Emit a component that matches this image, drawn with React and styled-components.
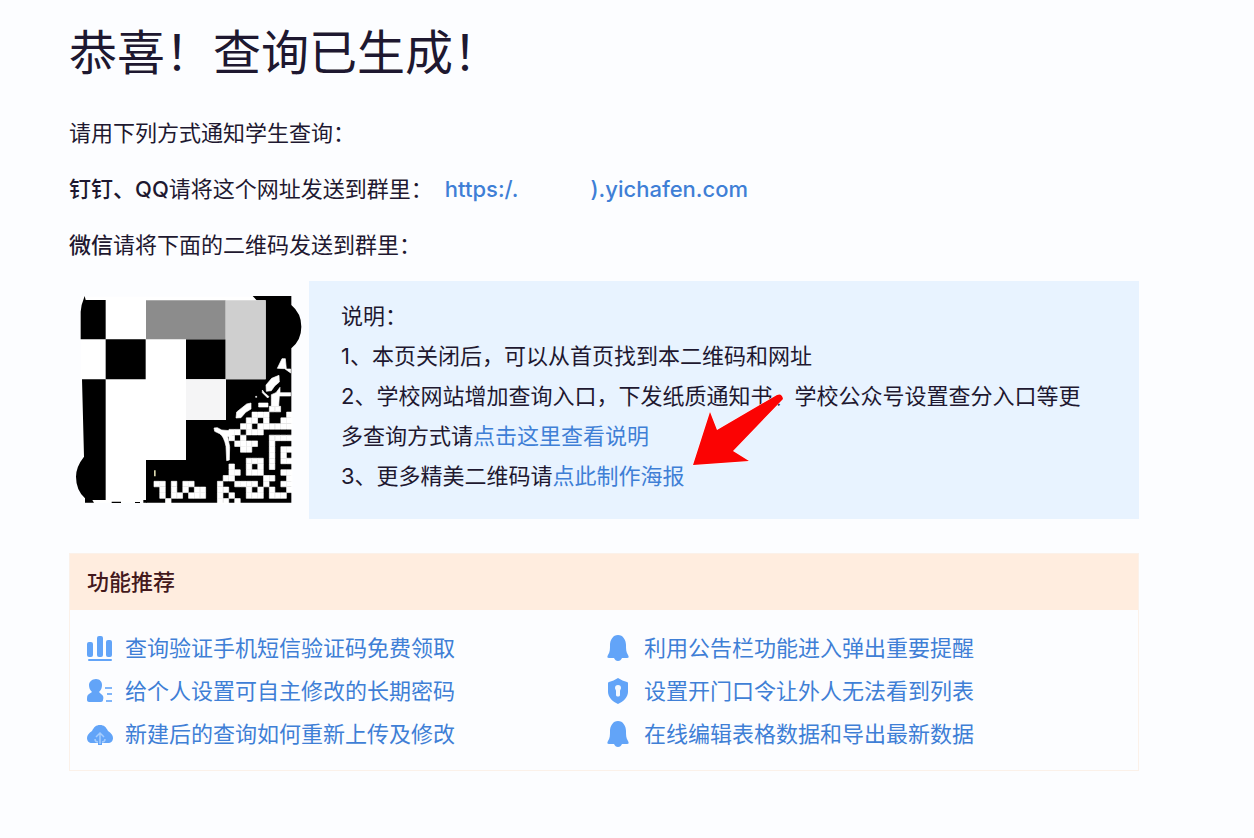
import React from 'react'
import styled, { createGlobalStyle } from 'styled-components'

const blue = '#3f7fd6'
const icon = '#62a4f8'

const GlobalStyle = createGlobalStyle`
  * {
    box-sizing: border-box;
  }

  body {
    margin: 0;
    background: #fcfdff;
    color: #1e1830;
    font-family: Inter, 'Noto Sans CJK SC', sans-serif;
    font-size: 22px;
    line-height: 40px;
  }
`

const Page = styled.main`
  padding: 17px 115px 48px 69px;
`

const Title = styled.h1`
  margin: 0 0 24px;

  font-size: 48px;
  font-weight: 400;
  line-height: 72px;
`

const Line = styled.p`
  margin: 0 0 16px;
`

const Strong = styled.strong`
  font-weight: 500;
`

const Link = styled.a`
  color: ${blue};
  text-decoration: none;
`

const SiteLink = styled(Link)`
  margin-left: 12px;

  font-weight: 500;
`

const Masked = styled.span`
  display: inline-block;
  width: 72px;
`

const Share = styled.section`
  margin-bottom: 34px;

  display: flex;
  align-items: stretch;
`

const QrCode = styled.svg`
  flex: none;
  width: 240px;
  height: 238px;
`

const Notes = styled.div`
  position: relative;
  flex: 1;
  padding: 15px 40px 23px 32px;

  background: #e8f3ff;

  p {
    margin: 0;
  }
`

const Pointer = styled.svg`
  position: absolute;
  top: 112px;
  left: 383px;
  width: 93px;
  height: 74px;
`

const Features = styled.section`
  border: 1px solid #fbf1e9;
`

const FeaturesTitle = styled.h2`
  margin: 0;
  padding: 8px 17px;

  background: #ffeddf;
  color: #43191c;
  font-size: 22px;
  font-weight: 500;
`

const FeatureList = styled.ul`
  margin: 0;
  padding: 18px 13px 16px 17px;

  display: grid;
  grid-template-columns: 1fr 1fr;
  row-gap: 3px;
  list-style: none;
`

const Feature = styled(Link)`
  display: flex;
  align-items: center;
  gap: 12px;

  svg {
    flex: none;
    width: 26px;
    height: 28px;
    fill: ${icon};
  }
`

const ChartIcon = () => (
  <svg viewBox='0 0 26 28' aria-hidden='true'>
    <rect x='0' y='8' width='6' height='15' rx='2' />
    <rect x='10' y='2' width='6' height='21' rx='2' />
    <rect x='19' y='6' width='6' height='17' rx='2' />
    <rect x='1' y='25' width='24' height='2' rx='1' />
  </svg>
)

const UserIcon = () => (
  <svg viewBox='0 0 26 28' aria-hidden='true'>
    <path d='M9 2c4 0 6 3 6 6 0 3-1 5-3 7l2 2c2 1 3 3 2 6 0 1-1 2-2 2H2c-1 0-2-1-2-2 0-3 0-5 2-6l3-2C3 13 2 11 2 8c0-3 3-6 7-6z' />
    <path d='M18 10h7v2h-7zM20 16h5v2h-5zM19 23h6v2h-6z' opacity='0.8' />
  </svg>
)

const CloudIcon = () => (
  <svg viewBox='0 0 26 28' aria-hidden='true'>
    <path d='M13 5c4 0 6 2 8 6 3 2 5 4 5 7s-2 5-5 5h-6v2h-4v-2H5c-3 0-5-2-5-5s2-5 5-7c2-4 4-6 8-6z' />
    <path
      d='M13 24V13M9 17l4-4 4 4M8 19q0 3 3 3M18 19q0 3-3 3'
      fill='none'
      stroke='#a5cdfd'
      strokeWidth='1.5'
    />
  </svg>
)

const BellIcon = () => (
  <svg viewBox='0 0 26 28' aria-hidden='true'>
    <path d='M12 1c5 0 8 5 8 10 0 4 0 7 2 10 1 2 1 3-1 3h-5c-1 2-2 3-4 3s-3-1-4-3H3c-2 0-2-1-1-3 2-3 2-6 2-10C4 6 7 1 12 1z' />
  </svg>
)

const ShieldIcon = () => (
  <svg viewBox='0 0 26 28' aria-hidden='true'>
    <path d='M12 1c3 2 6 3 9 4 1 0 1 1 1 2v8c0 5-5 10-10 12C7 25 2 20 2 15V7c0-1 0-2 1-2 3-1 6-2 9-4z' />
    <path
      d='M12 8c2 0 3 1 3 3 0 1-1 2-1 3v4c0 2-4 2-4 0v-4c0-1-1-2-1-3 0-2 1-3 3-3z'
      fill='#f4f9ff'
    />
  </svg>
)

// light modules of the code that stay visible below the mosaic
const modules = [
  '....................##..',
  '.................###...#',
  '................##.#..##',
  '...............##.######',
  '.............##.###.....',
  '.............#.#....####',
  '..............####..#...',
  '...............##...#.##',
  '....................#.#.',
  '................###.#.##',
  '.............#..#.#.#...',
  '.............##.###...##',
  '............##.....##..#',
  '##.#.##....#..####.#..##',
  '.#.#.#.##..##...#.#.#..#',
  '.#.##.###..#.#..###.###.',
  '..#........##.#.........'
]

const modulePath = modules
  .flatMap((row, y) =>
    [...row].map((cell, x) =>
      cell === '#' ? `M${282 + x * 17.3} ${379 + y * 17.3}h16.5v16.5h-16.5z` : ''
    )
  )
  .join('')

const QrPicture = () => (
  <QrCode viewBox='27 3 720 714' role='img' aria-label='二维码'>
    <rect x='62' y='50' width='632' height='618' fill='#fff' />
    <path d='M70 60l4-12 3 12h60v118H62V95q1-20 8-35zM137 178h120v120H137zM378 178h119v120H378z' />
    <path d='M66 298h71v362h-40l5 8H75v-13q-27-25-27-65 0-30 24-60z' />
    <path d='M578 48h116v27q30 25 30 65t-30 65v463H258V540h120V420h120V298h119V61h-27z' />
    <path d='M155 665h28v4h-28zM225 666h15v3h-15zM250 660h10v8h-10z' />
    <path d='M258 61h239v117H258z' fill='#8c8c8c' />
    <path d='M497 61h120v237H497z' fill='#cfcfcf' />
    <path d='M378 298h119v122H378z' fill='#f5f5f6' />

    <g fill='#fff' stroke='#fff' strokeWidth='2' strokeLinejoin='round'>
      <path d='M652 265l14-29h10l3 31h13v12l-18-13z' />
      <path d='M618 315l17-20 22-9 1 20-14 12-10 14-15 2z' />
      <path d='M607 330l6 8 14 12-4 4-16-16zM634 344l14-6 12-16v16h32v10h-34l-2 30h-22v-22z' />
      <path d='M596 369h28v12h-28zM587 349h3v3h-3z' />
      <path d='M528 414l2-18 30-24 13-3v18l-16 10-14 16z' />
      <path d='M462 444l10-1 13 7 25 2 6 14-13 4 6 30-1 40-8 2-2-43q-6-30-19-38l-15-7z' />
      <path d={modulePath} />
    </g>
    <path d='M282 571h5v18h-5z' fill='#d9d6ae' />
  </QrCode>
)

const features = [
  { Icon: ChartIcon, label: '查询验证手机短信验证码免费领取' },
  { Icon: BellIcon, label: '利用公告栏功能进入弹出重要提醒' },
  { Icon: UserIcon, label: '给个人设置可自主修改的长期密码' },
  { Icon: ShieldIcon, label: '设置开门口令让外人无法看到列表' },
  { Icon: CloudIcon, label: '新建后的查询如何重新上传及修改' },
  { Icon: BellIcon, label: '在线编辑表格数据和导出最新数据' }
]

const App = () => (
  <React.Fragment>
    <GlobalStyle />

    <Page lang='zh-CN'>
      <Title>恭喜！查询已生成！</Title>

      <Line>请用下列方式通知学生查询：</Line>
      <Line>
        <Strong>钉钉、QQ</Strong>请将这个网址发送到群里：
        <SiteLink href='#site'>
          https:/.
          <Masked />
          ).yichafen.com
        </SiteLink>
      </Line>
      <Line>
        <Strong>微信</Strong>请将下面的二维码发送到群里：
      </Line>

      <Share>
        <QrPicture />

        <Notes>
          <p>说明：</p>
          <p>1、本页关闭后，可以从首页找到本二维码和网址</p>
          <p>
            2、学校网站增加查询入口，下发纸质通知书、学校公众号设置查分入口等更多查询方式请
            <Link href='#help'>点击这里查看说明</Link>
          </p>
          <p>
            3、更多精美二维码请<Link href='#poster'>点此制作海报</Link>
          </p>

          <Pointer viewBox='0 0 93 74' aria-hidden='true'>
            <path
              d='M1 72L18 19l7 18L85 2q5-2 6 4L41 58l16 10z'
              fill='#fb0303'
              stroke='#fff'
              strokeWidth='1'
              paintOrder='stroke'
            />
          </Pointer>
        </Notes>
      </Share>

      <Features>
        <FeaturesTitle>功能推荐</FeaturesTitle>

        <FeatureList>
          {features.map(({ Icon, label }) => (
            <li key={label}>
              <Feature href='#feature'>
                <Icon />
                {label}
              </Feature>
            </li>
          ))}
        </FeatureList>
      </Features>
    </Page>
  </React.Fragment>
)

export default App
